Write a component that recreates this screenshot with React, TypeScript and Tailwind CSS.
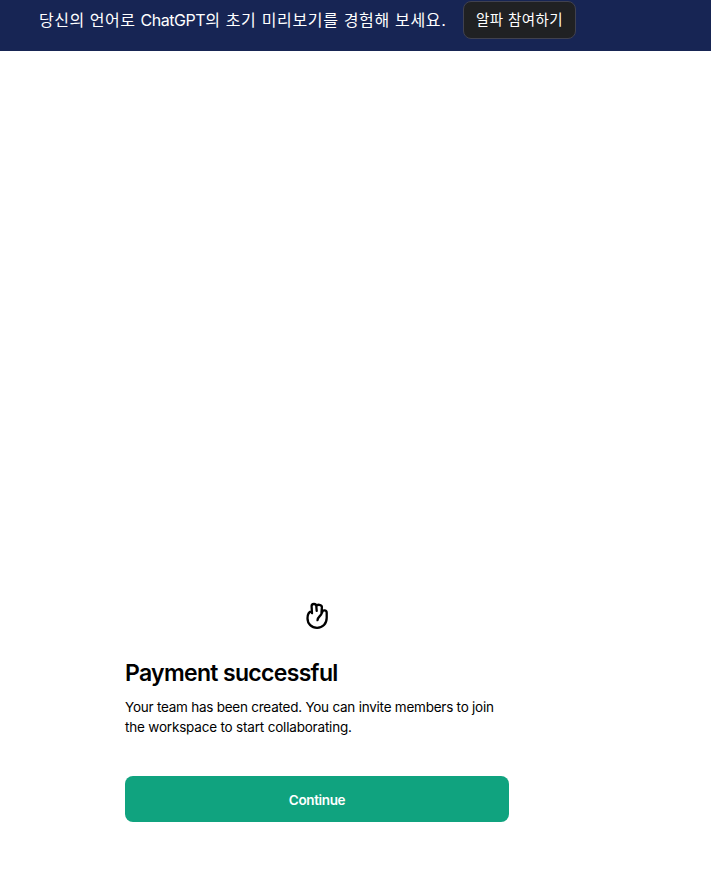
function HandIcon() {
  return (
    <svg width="24" height="29" viewBox="0 0 24 29" fill="none" stroke="black" strokeWidth="2.3" strokeLinecap="round" strokeLinejoin="round">
      <path d="M7 12.2L6.6 5.2C6.5 2.4 11 2.2 11.3 5L11.7 9.8M11.4 5.3C11.9 3 17.1 3.2 16.9 6.3L16.5 11.6M17 11.8C17.4 8.6 21.7 8.8 21.7 11.8V16.8C21.7 22.8 17.7 26.8 12.1 26.8C6.5 26.8 2.5 22.8 2.5 17.2C2.5 13.8 3.8 11.1 6.6 10.2M16.7 11.8C16.5 14.8 12.7 15.6 12.5 19.2" />
    </svg>
  );
}

export default function App() {
  return (
    <div className="min-h-[896px] w-full bg-white font-['Inter','Noto_Sans_CJK_KR',sans-serif] text-black">
      <header className="flex h-[51px] items-start bg-[#172554] pl-[39px] pt-px text-white">
        <p className="mr-4 w-[408px] whitespace-nowrap text-base leading-[38px] tracking-[0.66px]">
          <span className="tracking-[0.52px]">당신의 언어로 </span><span className="tracking-[-0.45px]">ChatGPT</span>의 초기 미리보기를 경험해 보세요.
        </p>
        <button className="h-[38px] w-[113px] whitespace-nowrap rounded-lg border border-[#40414f] bg-[#202123] text-[14.5px] tracking-[0.4px]">
          알파 참여하기
        </button>
      </header>
      <main className="ml-[125px] mt-[550px] w-96">
        <div className="flex justify-center">
          <HandIcon />
        </div>
        <h1 className="mt-[27px] whitespace-nowrap text-[23px] font-semibold leading-8 tracking-[-0.67px]">Payment successful</h1>
        <p className="mt-2 whitespace-nowrap text-[13.5px] leading-5 tracking-[-0.24px]">
          Your team has been created. You can invite members to join
          <br />
          <span className="tracking-[-0.19px]">the workspace to start collaborating.</span>
        </p>
        <button className="mt-[39px] h-[46px] w-full rounded-lg bg-[#10a37f] pt-0.5 text-[13.5px] font-semibold tracking-[-0.35px] text-white">Continue</button>
      </main>
    </div>
  );
}
